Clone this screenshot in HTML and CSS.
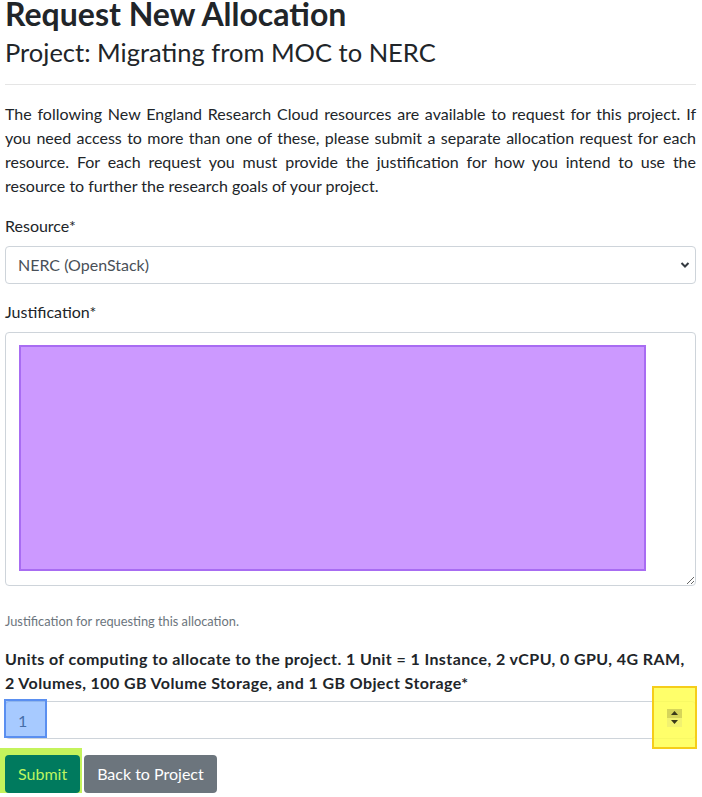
FILE: index.html
```html
<!DOCTYPE html>
<html lang="en">
<head>
<meta charset="utf-8">
<title>Request New Allocation</title>
<link rel="stylesheet" href="styles.css">
</head>
<body>
<main class="page">
  <h2 class="title">Request New Allocation</h2>
  <h3 class="subtitle">Project: Migrating from MOC to NERC</h3>
  <hr class="rule">
  <p class="intro">The following New England Research Cloud resources are available to request for this project. If you need access to more than one of these, please submit a separate allocation request for each resource. For each request you must provide the justification for how you intend to use the resource to further the research goals of your project.</p>

  <form class="form">
    <div class="group">
      <label class="label" for="resource">Resource*</label>
      <div class="select-wrap">
        <select id="resource" class="control select">
          <option>NERC (OpenStack)</option>
        </select>
        <svg class="chevron" width="10" height="8" viewBox="0 0 10 8"><path d="M1.5 2 L5 5.5 L8.5 2" fill="none" stroke="#343a40" stroke-width="2"/></svg>
      </div>
    </div>

    <div class="group">
      <label class="label" for="justification">Justification*</label>
      <div class="textarea-wrap">
        <textarea id="justification" class="control textarea"></textarea>
        <div class="hl-content"></div>
      </div>
      <small class="help">Justification for requesting this allocation.</small>
    </div>

    <div class="group">
      <label class="label bold" for="units">Units of computing to allocate to the project. 1 Unit = 1 Instance, 2 vCPU, 0 GPU, 4G RAM, 2 Volumes, 100 GB Volume Storage, and 1 GB Object Storage*</label>
      <div class="number-wrap">
        <input id="units" class="control number" type="text" value="1">
        <div class="hl-value"></div>
        <div class="hl-spin">
          <span class="spin up"><svg width="9" height="6" viewBox="0 0 9 6"><path d="M4.5 1 L8 5 L1 5 Z" fill="#3a3a1a"/></svg></span>
          <span class="spin down"><svg width="9" height="6" viewBox="0 0 9 6"><path d="M1 1 L8 1 L4.5 5 Z" fill="#3a3a1a"/></svg></span>
        </div>
      </div>
    </div>

    <div class="actions">
      <span class="hl-submit"><button type="button" class="btn btn-submit">Submit</button></span>
      <button type="button" class="btn btn-back">Back to Project</button>
    </div>
  </form>
</main>
</body>
</html>
```

FILE: styles.css
```css
* { box-sizing: border-box; }

html, body {
  margin: 0;
  padding: 0;
  background: #fff;
}

body {
  font-family: "Lato", "Noto Sans", sans-serif;
  font-size: 16px;
  line-height: 1.5;
  color: #212529;
  overflow: hidden;
}

.page {
  padding: 0 6px 0 5px;
  margin-top: -5px;
}

.title {
  font-size: 32px;
  font-weight: 700;
  line-height: 1.2;
  margin: 0 0 3px 0;
}

.subtitle {
  font-size: 25.5px;
  font-weight: 400;
  line-height: 33.6px;
  margin: 0 0 8px 0;
}

.rule {
  border: 0;
  border-top: 1px solid rgba(0, 0, 0, 0.1);
  margin: 14px 0 17px 0;
}

.intro {
  margin: 0 0 16px 0;
  text-align: justify;
}

.form { margin: 0; }

.group { margin-bottom: 16px; }

.label {
  display: block;
  margin-bottom: 8px;
}

.label.bold {
  font-weight: 700;
  letter-spacing: 0.4px;
  margin-bottom: 6px;
}

.control {
  display: block;
  width: 100%;
  height: 38px;
  padding: 6px 12px;
  font-family: inherit;
  font-size: 16px;
  line-height: 1.5;
  color: #495057;
  background: #fff;
  border: 1px solid #ced4da;
  border-radius: 4px;
  outline: none;
}

.select-wrap { position: relative; }

.select {
  appearance: none;
  -webkit-appearance: none;
  padding-right: 28px;
}

.chevron {
  position: absolute;
  right: 6px;
  top: 15px;
  pointer-events: none;
}

.textarea-wrap { position: relative; }

.textarea {
  height: 254px;
  resize: vertical;
}

.hl-content {
  position: absolute;
  left: 14px;
  top: 13px;
  width: 627px;
  height: 226px;
  background: #cc99ff;
  border: 2px solid #a86cf2;
}

.help {
  display: block;
  margin-top: 26px;
  font-size: 12.8px;
  line-height: 1.5;
  color: #6c757d;
}

.number-wrap { position: relative; }

.number { color: #3b4550; }

.hl-value {
  position: absolute;
  left: -1px;
  top: -2px;
  width: 43px;
  height: 39px;
  background: rgba(80, 150, 255, 0.5);
  border: 2px solid #5a8ff0;
}

.hl-spin {
  position: absolute;
  right: -1px;
  top: -15px;
  width: 45px;
  height: 63px;
  background: rgba(255, 255, 80, 0.85);
  border: 2px solid #f5cd1a;
  display: flex;
  flex-direction: column;
  align-items: center;
  justify-content: center;
}

.spin {
  width: 15px;
  height: 9px;
  display: flex;
  align-items: center;
  justify-content: center;
}

.spin.up { background: #d6d55a; }
.spin.down { background: #f2f270; }

.actions {
  display: flex;
  align-items: center;
  gap: 2px;
}

.hl-submit {
  display: inline-flex;
  padding: 7px 2px 4px 5px;
  margin: -7px 0 -4px -5px;
  background: #c4f35c;
}

.btn {
  font-family: inherit;
  font-size: 16px;
  line-height: 1.5;
  padding: 6px 12px;
  border: 1px solid transparent;
  border-radius: 4px;
  cursor: pointer;
}

.btn-submit {
  background: #007a5e;
  color: #bdf560;
}

.btn-back {
  background: #6c757d;
  color: #fff;
}
```
